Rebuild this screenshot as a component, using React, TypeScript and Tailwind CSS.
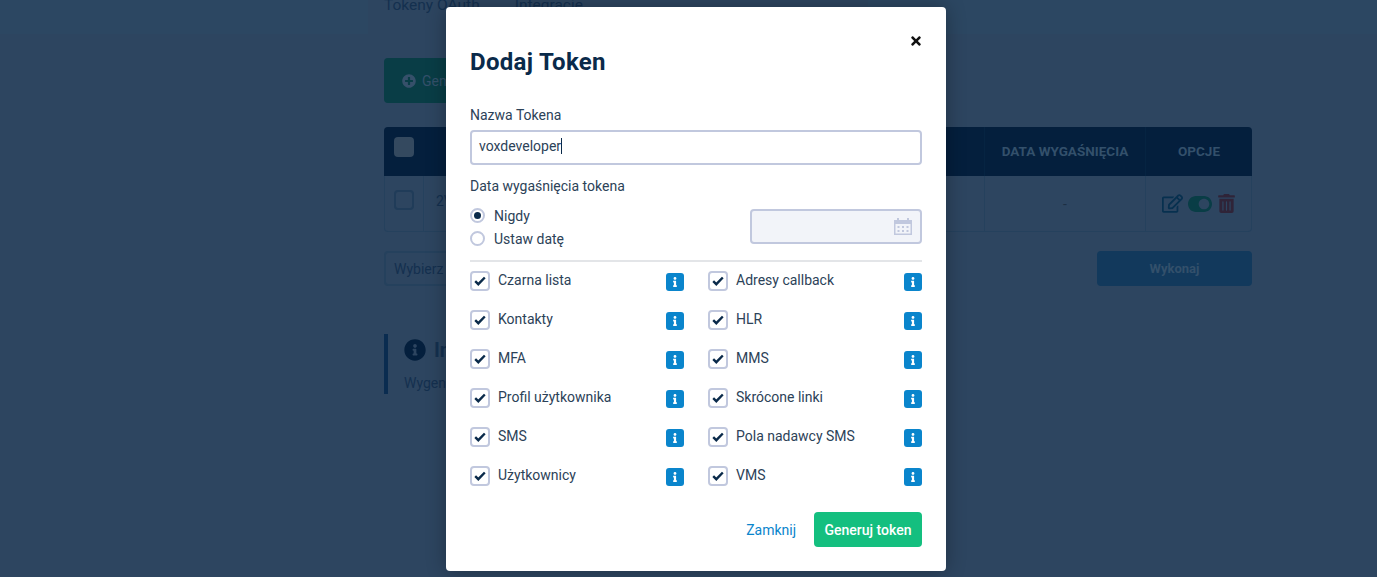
import { FaInfo, FaInfoCircle, FaPlusCircle, FaRegEdit, FaTimes, FaToggleOn, FaTrashAlt } from 'react-icons/fa';

const permissions = [
  'Czarna lista', 'Adresy callback',
  'Kontakty', 'HLR',
  'MFA', 'MMS',
  'Profil użytkownika', 'Skrócone linki',
  'SMS', 'Pola nadawcy SMS',
  'Użytkownicy', 'VMS',
];

const BackgroundPage = () => (
  <div className="h-[577px] overflow-hidden bg-[#2d4560] text-[#14304f]">
    <div className="h-[34px] bg-[#2c4762]">
      <div className="ml-[368px] flex h-[34px] w-[500px] gap-[35px] bg-[#2d4560] pl-4 text-[15.5px] leading-[10px]">
        <span>Tokeny OAuth</span>
        <span>Integracje</span>
      </div>
    </div>

    <div className="ml-[384px] w-[868px]">
      <button className="mt-6 flex h-[45px] w-[200px] items-center gap-1.5 rounded bg-[#093d46] pl-[18px] text-sm text-[#34506a]">
        <FaPlusCircle size={14} className="text-[#36506a]" />
        Generuj token
      </button>

      <div className="mt-[24px] flex h-[49px] rounded-t bg-[#041f3d] text-[13.5px] font-bold text-[#33506b]">
        <div className="flex w-[39px] justify-center pt-[10px]">
          <div className="h-5 w-5 rounded bg-[#34495f]" />
        </div>
        <div className="flex-1" />
        <div className="flex w-[161px] items-center justify-center border-l border-[#062442]">DATA WYGAŚNIĘCIA</div>
        <div className="flex w-[107px] items-center justify-center border-l border-[#062442]">OPCJE</div>
      </div>
      <div className="flex h-[56px] rounded-b border border-t-0 border-[#25415d] text-sm">
        <div className="flex w-[39px] justify-center border-r border-[#25415d] pt-[14px]">
          <div className="h-5 w-5 rounded border-2 border-[#203c59]" />
        </div>
        <div className="flex flex-1 items-center pb-[6px] pl-3">2V</div>
        <div className="flex w-[161px] items-center justify-center border-l border-[#25415d] text-[#1c2f44]">-</div>
        <div className="flex w-[106px] items-center justify-center gap-[5px] border-l border-[#25415d]">
          <FaRegEdit size={21} className="text-[#07304f]" />
          <FaToggleOn size={24} className="text-[#093d46]" />
          <FaTrashAlt size={19} className="text-[#2f2438]" />
        </div>
      </div>

      <div className="mt-[19px] flex items-start justify-between">
        <div className="flex h-[35px] w-[200px] items-center rounded border-2 border-[#25415d] pl-2 text-sm">Wybierz</div>
        <button className="h-[35px] w-[155px] rounded bg-[#12395c] text-[13px] font-bold text-[#33506b]">Wykonaj</button>
      </div>

      <div className="mt-[48px] h-[60px] border-l-4 border-[#0a2c50] pl-4">
        <div className="flex items-center gap-2 pt-[2px] text-xl font-bold">
          <FaInfoCircle size={22} className="text-[#041f3d]" />
          Informacje
        </div>
        <div className="mt-[9px] text-sm">Wygenerowane tokeny</div>
      </div>
    </div>
  </div>
);

const CalendarIcon = () => (
  <svg width="18" height="17" viewBox="0 0 18 17" className="text-[#c1c8de]" fill="currentColor">
    <rect x="3" y="0" width="2" height="3" />
    <rect x="13" y="0" width="2" height="3" />
    <path d="M0 2h18v15H0zM1.5 6v9.5h15V6z" fillRule="evenodd" />
    <rect x="3.5" y="8" width="2" height="2" />
    <rect x="8" y="8" width="2" height="2" />
    <rect x="12.5" y="8" width="2" height="2" />
    <rect x="3.5" y="12" width="2" height="2" />
    <rect x="8" y="12" width="2" height="2" />
    <rect x="12.5" y="12" width="2" height="2" />
  </svg>
);

const Radio = ({ label, checked }: { label: string; checked?: boolean }) => (
  <div className="flex h-[23px] items-center gap-[9px]">
    <div className="flex h-[15px] w-[15px] items-center justify-center rounded-full border-2 border-[#c1c8de]">
      {checked && <div className="h-[7px] w-[7px] rounded-full bg-[#0a2a4a]" />}
    </div>
    <span>{label}</span>
  </div>
);

const Permission = ({ label }: { label: string }) => (
  <div className="flex h-[39px] items-start justify-between">
    <div className="flex items-start gap-2">
      <div className="flex h-5 w-5 items-center justify-center rounded border-2 border-[#c1c8de]">
        <svg width="12" height="10" viewBox="0 0 12 10" fill="none">
          <path d="M1.2 5.2 L4.3 8.2 L10.8 1.5" stroke="#0a2a4a" strokeWidth="2.4" />
        </svg>
      </div>
      <span className="leading-[19px]">{label}</span>
    </div>
    <div className="mt-0.5 flex h-[18px] w-[18px] items-center justify-center rounded-[3px] bg-[#0a85cc]">
      <FaInfo size={10} className="text-white" />
    </div>
  </div>
);

const TokenModal = () => (
  <div className="absolute left-[446px] top-[7px] h-[564px] w-[500px] rounded bg-white px-6 text-sm text-[#2c4258] shadow-[0_0_20px_rgba(0,0,0,0.3)]">
    <FaTimes size={14} className="absolute right-[23px] top-[27px] text-[#111]" />
    <h2 className="pt-[39px] text-2xl leading-[32px] font-bold tracking-[0.3px] text-[#0a2a4a]">Dodaj Token</h2>

    <label className="mt-[27px] block leading-[20px]">Nazwa Tokena</label>
    <div className="mt-[5px] flex h-[35px] items-center rounded border-2 border-[#c1c8de] pb-[3px] pl-[7px]">
      voxdeveloper
      <span className="h-4 w-px bg-[#0a2a4a]" />
    </div>

    <label className="mt-[11px] block leading-[20px]">Data wygaśnięcia tokena</label>
    <div className="mt-[4px] flex justify-between">
      <div className="pt-[4px]">
        <Radio label="Nigdy" checked />
        <Radio label="Ustaw datę" />
      </div>
      <div className="mt-[9px] flex h-[35px] w-[172px] items-center justify-end rounded border-2 border-[#c1c8de] bg-[#f2f4f9] pr-[8px]">
        <CalendarIcon />
      </div>
    </div>

    <div className="mt-[10px] border-t-2 border-[#e3e5e8]" />

    <div className="mt-[9px] grid grid-cols-2 gap-x-6">
      {permissions.map((p) => (
        <Permission key={p} label={p} />
      ))}
    </div>

    <div className="mt-[7px] flex items-center justify-end gap-[18px]">
      <button className="text-[#0a85cc]">Zamknij</button>
      <button className="h-[35px] w-[108px] rounded bg-[#14bf7f] font-medium text-white">Generuj token</button>
    </div>
  </div>
);

export default function App() {
  return (
    <div className="relative h-[577px] w-[1377px] overflow-hidden font-['Roboto',sans-serif]">
      <BackgroundPage />
      <TokenModal />
    </div>
  );
}
